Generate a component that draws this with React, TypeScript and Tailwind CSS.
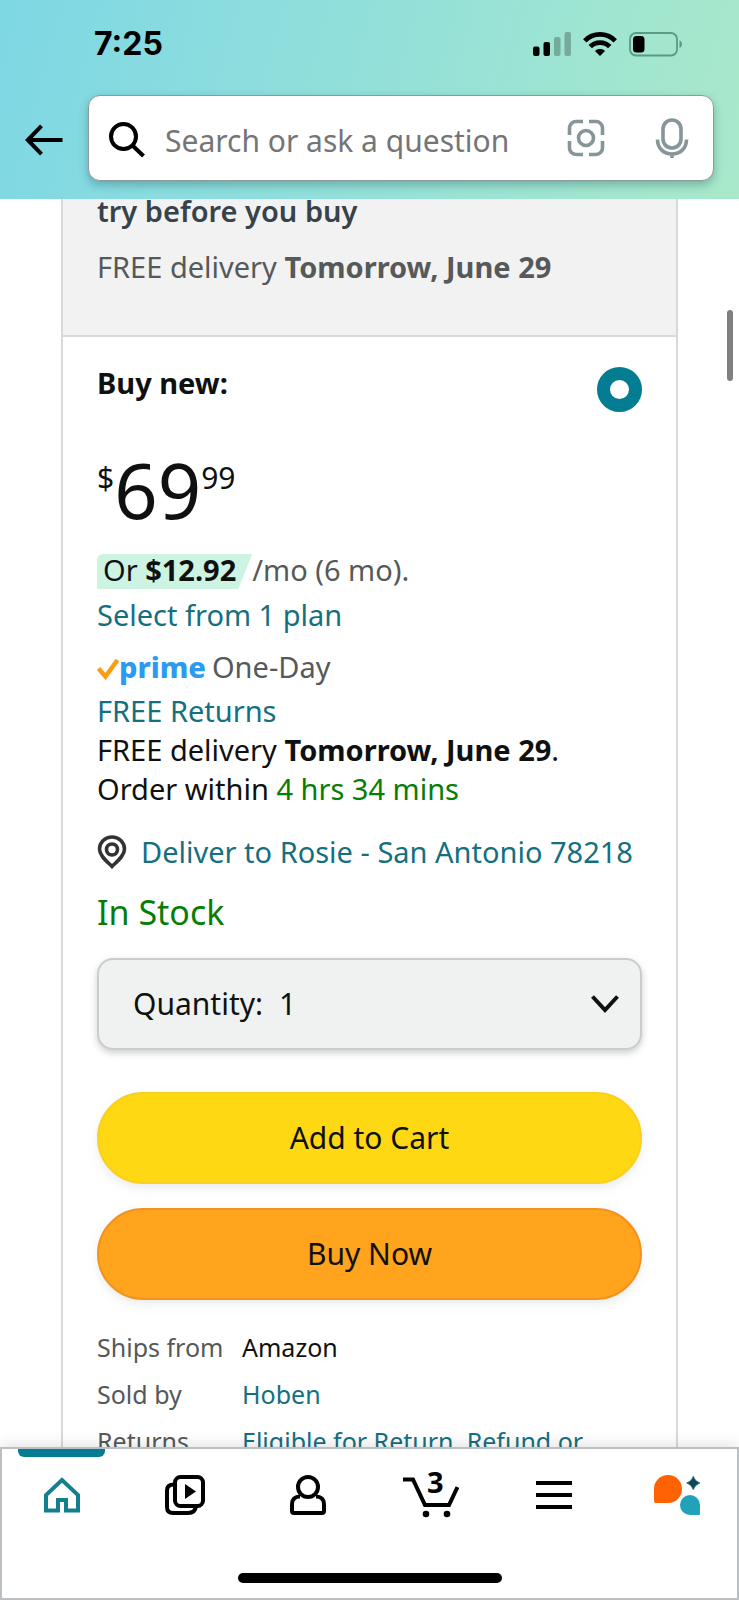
import { useState, type ReactNode } from "react";

const TEAL = "text-[#14707f]";

function StatusBar() {
    return (
        <div className="flex items-center justify-between pl-[94px] pr-14 pt-[26px] h-[62px]">
            <span className="font-['Inter'] text-[32px] leading-9 font-bold text-black">7:25</span>
            <div className="flex items-center gap-3">
                <svg width="38" height="24" viewBox="0 0 38 24" aria-hidden="true">
                    <rect x="0" y="14.5" width="6.5" height="9.5" rx="2" />
                    <rect x="10.5" y="10" width="6.5" height="14" rx="2" />
                    <rect x="21" y="5" width="6.5" height="19" rx="2" opacity="0.25" />
                    <rect x="31.5" y="0" width="6.5" height="24" rx="2" opacity="0.25" />
                </svg>
                <svg width="34" height="24" viewBox="0 0 34 24" fill="none" stroke="#000" strokeWidth="4.8" aria-hidden="true">
                    <path d="M1.8 8.8C10 .3 24 .3 32.2 8.8" />
                    <path d="M7.3 14.6C12.5 9.2 21.5 9.2 26.7 14.6" />
                    <path d="M17 24l-5-5c2.6-2.6 7.4-2.6 10 0z" fill="#000" stroke="none" />
                </svg>
                <svg width="54" height="26" viewBox="0 0 54 26" fill="none" aria-hidden="true">
                    <rect x="1" y="2" width="47" height="22.5" rx="6" stroke="#5c9987" strokeWidth="1.8" />
                    <rect x="4" y="5" width="11.5" height="16.5" rx="3.5" fill="#000" />
                    <path d="M50.500 9.500c3.300 1.200 3.300 6.300 0 7.500z" fill="#5c9987" />
                </svg>
            </div>
        </div>
    );
}

function SearchBar() {
    const [query, setQuery] = useState("");

    return (
        <div className="flex items-center pl-6 pr-[25px] pt-[33px]">
            <button type="button" aria-label="Back" className="w-16 shrink-0 pt-1">
                <svg width="40" height="32" viewBox="0 0 40 32" fill="none" stroke="#000" strokeWidth="4" aria-hidden="true">
                    <path d="M38.500 16H4M17.500 1.800L3.800 16l13.700 14.200" />
                </svg>
            </button>
            <div className="flex h-[86px] min-w-0 flex-1 items-center rounded-xl border border-[#8d9a9c] bg-white pl-5 pr-6 shadow-[0_4px_10px_rgba(0,60,60,0.3)]">
                <label className="flex min-w-0 flex-1 items-center gap-5 pt-1">
                    <svg width="36" height="36" viewBox="0 0 36 36" fill="none" stroke="#000" strokeWidth="4" className="shrink-0" aria-hidden="true">
                        <circle cx="14.500" cy="14.500" r="12.500" />
                        <path d="M23.500 23.500l11 10.500" />
                    </svg>
                    <input
                        type="text"
                        aria-label="Search"
                        value={query}
                        onChange={(e) => setQuery(e.target.value)}
                        placeholder="Search or ask a question"
                        className="min-w-0 flex-1 pt-0.5 text-[30px] leading-10 placeholder:text-[#757575] focus:outline-none"
                    />
                </label>
                <button type="button" aria-label="Scan" className="mr-[50px] shrink-0">
                    <svg width="38" height="38" viewBox="0 0 38 38" fill="none" stroke="#87959a" strokeWidth="3.6" aria-hidden="true">
                        <path d="M16 2.500H9A6.500 6.500 0 0 0 2.500 9v7M22 2.500h7A6.500 6.500 0 0 1 35.500 9v7M16 35.500H9A6.500 6.500 0 0 1 2.500 29v-7M22 35.500h7a6.500 6.500 0 0 0 6.500-6.500v-7" />
                        <circle cx="19" cy="19" r="7.5" />
                    </svg>
                </button>
                <button type="button" aria-label="Voice search" className="shrink-0">
                    <svg width="34" height="40" viewBox="0 0 34 40" fill="none" stroke="#87959a" strokeWidth="3.6" aria-hidden="true">
                        <rect x="8" y="2" width="18" height="28" rx="9" />
                        <path d="M2.500 21.500c0 9 6.500 14.500 14.500 14.500s14.500-5.500 14.500-14.500M17 35v5" />
                    </svg>
                </button>
            </div>
        </div>
    );
}

function BuyBox() {
    const [quantity, setQuantity] = useState("1");

    return (
        <section className="px-[34px] pt-[26px]">
            <div className="flex items-start justify-between">
                <label htmlFor="buy-new" className="font-bold">
                    Buy new:
                </label>
                <input
                    id="buy-new"
                    type="radio"
                    defaultChecked
                    className="mt-1 size-[45px] appearance-none rounded-full border-[13px] border-[#047c91] bg-white"
                />
            </div>

            <div className="mt-10 flex items-start">
                <span className="pt-1.5 text-[30px]">$</span>
                <span className="text-[76px] leading-none">69</span>
                <span className="pt-1.5 text-[30px]">99</span>
            </div>

            <div className="mt-[26px] flex items-start leading-[31px]">
                <span className="h-[35px] rounded-tl-md bg-[#cdf3e2] pl-1.5 pr-4 [clip-path:polygon(0_0,100%_0,calc(100%-14px)_100%,0_100%)]">
                    Or <b>$12.92</b>
                </span>
                <span className="text-[#565959]">/mo (6 mo).</span>
            </div>
            <a href="#plans" className={`mt-1.5 block ${TEAL}`}>
                Select from 1 plan
            </a>

            <div className="mt-3 flex items-center text-[#565959]">
                <svg width="22" height="22" viewBox="0 0 22 22" fill="none" stroke="#f99d12" strokeWidth="4.5" className="mt-1" aria-hidden="true">
                    <path d="M1.500 10.500l7 8L20.500 2" />
                </svg>
                <span className="mr-1.5 font-extrabold text-[#2b9bf2]">prime</span>
                One-Day
            </div>

            <div className="mt-1 leading-[39px]">
                <a href="#returns" className={`block ${TEAL}`}>
                    FREE Returns
                </a>
                <p>
                    FREE delivery <b>Tomorrow, June 29</b>.
                </p>
                <p>
                    Order within <span className="text-[#067d06]">4 hrs 34 mins</span>
                </p>
            </div>

            <a href="#address" className={`mt-6 flex items-center gap-3.5 ${TEAL}`}>
                <svg width="30" height="34" viewBox="0 0 30 34" fill="none" stroke="#333" strokeWidth="3.6" className="shrink-0" aria-hidden="true">
                    <path d="M15 31.500C10 26.500 2.500 21 2.500 14a12.500 12 0 0 1 25 0c0 7-7.500 12.500-12.500 17.500z" />
                    <circle cx="15" cy="14.5" r="5.5" />
                </svg>
                Deliver to Rosie - San Antonio 78218
            </a>

            <p className="mt-5 text-[34px] text-[#067d06]">In Stock</p>

            <div className="mt-[26px] flex h-[92px] items-center rounded-2xl border-2 border-[#c9cdcd] bg-[#f0f2f2] pl-[34px] pr-5 text-[30px] shadow-[0_3px_7px_rgba(15,17,17,0.2)]">
                <label htmlFor="quantity">Quantity:</label>
                <select
                    id="quantity"
                    value={quantity}
                    onChange={(e) => setQuantity(e.target.value)}
                    className="ml-4 h-full flex-1 appearance-none focus:outline-none"
                >
                    <option>1</option>
                    <option>2</option>
                    <option>3</option>
                </select>
                <svg width="30" height="20" viewBox="0 0 30 20" fill="none" stroke="#0f1111" strokeWidth="4" className="pointer-events-none" aria-hidden="true">
                    <path d="M2.500 2.500L15 16 27.500 2.500" />
                </svg>
            </div>

            <div className="mt-[42px] flex flex-col gap-6 text-[30px]">
                <button type="button" className="h-[92px] rounded-full border-2 border-[#f9d020] bg-[#ffd814] shadow-[0_4px_10px_rgba(213,217,217,0.5)]">
                    Add to Cart
                </button>
                <button type="button" className="h-[92px] rounded-full border-2 border-[#f3931f] bg-[#ffa41c] shadow-[0_4px_10px_rgba(213,217,217,0.5)]">
                    Buy Now
                </button>
            </div>

            <table className="mt-6 text-left text-[25px] leading-[47px]">
                <tbody>
                    <tr>
                        <th className="w-[145px] font-normal text-[#565959]">Ships from</th>
                        <td>Amazon</td>
                    </tr>
                    <tr>
                        <th className="font-normal text-[#565959]">Sold by</th>
                        <td>
                            <a href="#seller" className={TEAL}>Hoben</a>
                        </td>
                    </tr>
                    <tr>
                        <th className="font-normal text-[#565959]">Returns</th>
                        <td>
                            <a href="#return-policy" className={TEAL}>Eligible for Return, Refund or</a>
                        </td>
                    </tr>
                </tbody>
            </table>
        </section>
    );
}

function NavItem({ label, active, children }: { label: string; active?: boolean; children: ReactNode }) {
    return (
        <a href={`#${label.toLowerCase()}`} aria-label={label} className="relative flex h-[92px] flex-1 items-center justify-center">
            {active && <span className="absolute inset-x-[18px] top-0 h-2 rounded-b-md bg-[#047c91]" />}
            {children}
        </a>
    );
}

function BottomNav() {
    return (
        <nav className="relative border-2 border-[#b9bfc2] bg-white shadow-[0_-2px_14px_rgba(0,0,0,0.12)]">
            <div className="-mx-0.5 flex">
                <NavItem label="Home" active>
                    <svg width="36" height="36" viewBox="0 0 36 36" fill="none" stroke="#14808f" strokeWidth="4" aria-hidden="true">
                        <path d="M2 33.500V18L18 3l16 15v15.500H22V23h-8v10.500z" />
                    </svg>
                </NavItem>
                <NavItem label="Inspire">
                    <svg width="40" height="40" viewBox="0 0 40 40" fill="none" stroke="#000" strokeWidth="4" aria-hidden="true">
                        <rect x="10" y="2" width="28" height="29" rx="5.5" />
                        <path d="M9 9.500c-5 0-7 2-7 6V32c0 4 2 6 6 6h15c5 0 7.500-2 8-7" />
                        <path d="M20 9v15l11-7.500z" fill="#000" stroke="none" />
                    </svg>
                </NavItem>
                <NavItem label="Account">
                    <svg width="36" height="40" viewBox="0 0 36 40" fill="none" stroke="#000" strokeWidth="4" aria-hidden="true">
                        <circle cx="18" cy="12" r="10" />
                        <path d="M10 21.500c-5 0-8 3-8 7.500v7q0 2 2 2h28q2 0 2-2v-7c0-4.500-3-7.500-8-7.500" />
                    </svg>
                </NavItem>
                <NavItem label="Cart">
                    <span className="relative">
                        <svg width="56" height="46" viewBox="0 0 56 46" fill="none" stroke="#000" strokeWidth="4" aria-hidden="true">
                            <path d="M0 7.500h10L22 33h24l8.500-18" />
                            <circle cx="23" cy="42" r="3.3" fill="#000" stroke="none" />
                            <circle cx="44" cy="42" r="3.3" fill="#000" stroke="none" />
                        </svg>
                        <span className="absolute left-6 -top-1.5 text-[29px] leading-8 font-bold text-black">3</span>
                    </span>
                </NavItem>
                <NavItem label="Menu">
                    <svg width="36" height="30" viewBox="0 0 36 30" fill="none" stroke="#000" strokeWidth="4" aria-hidden="true">
                        <path d="M0 3h36M0 15h36M0 27h36" />
                    </svg>
                </NavItem>
                <NavItem label="Rufus">
                    <svg width="46" height="40" viewBox="0 0 46 40" aria-hidden="true">
                        <path d="M14 0a14 14 0 0 1 0 28H2q-2 0-2-2V14A14 14 0 0 1 14 0z" fill="#ff6200" />
                        <path d="M36 20a10 10 0 0 1 10 10v8.500q0 1.500-1.500 1.500H36a10 10 0 0 1 0-20z" fill="#22a2b8" />
                        <path d="M39.300 1.300q1.600 5 6.700 6.700q-5.100 1.700-6.700 6.700q-1.600-5-6.700-6.700q5.100-1.700 6.700-6.700z" fill="#0b4a54" stroke="#0b4a54" strokeWidth="0.6" />
                    </svg>
                </NavItem>
            </div>
            <div className="flex h-[57px] items-center justify-center pt-3">
                <span className="mt-4 mb-3 h-2.5 w-[264px] rounded-full bg-black" />
            </div>
        </nav>
    );
}

export default function App() {
    return (
        <div className="relative flex h-screen flex-col bg-white font-['Noto_Sans',sans-serif] text-[29px] leading-10 text-[#0f1111]">
            <header className="h-[199px] shrink-0 overflow-hidden bg-linear-105 from-[#7ed7e5] via-[#93e0d9] to-[#a9e9ca]">
                <StatusBar />
                <SearchBar />
            </header>

            <main className="min-h-0 flex-1 overflow-hidden">
                <div className="mx-[61px] border-x-2 border-[#d7dada]">
                    <section className="border-b-2 border-[#d7dada] bg-[#f2f2f2] px-[34px] pb-12">
                        <h2 className="-mt-2 font-semibold text-[#37424a]">try before you buy</h2>
                        <p className="mt-4 text-[#565959]">
                            FREE delivery <b>Tomorrow, June 29</b>
                        </p>
                    </section>
                    <BuyBox />
                </div>
            </main>

            <div className="absolute right-1.5 top-[310px] h-[71px] w-1.5 rounded-full bg-[#808080]" />

            <BottomNav />
        </div>
    );
}
